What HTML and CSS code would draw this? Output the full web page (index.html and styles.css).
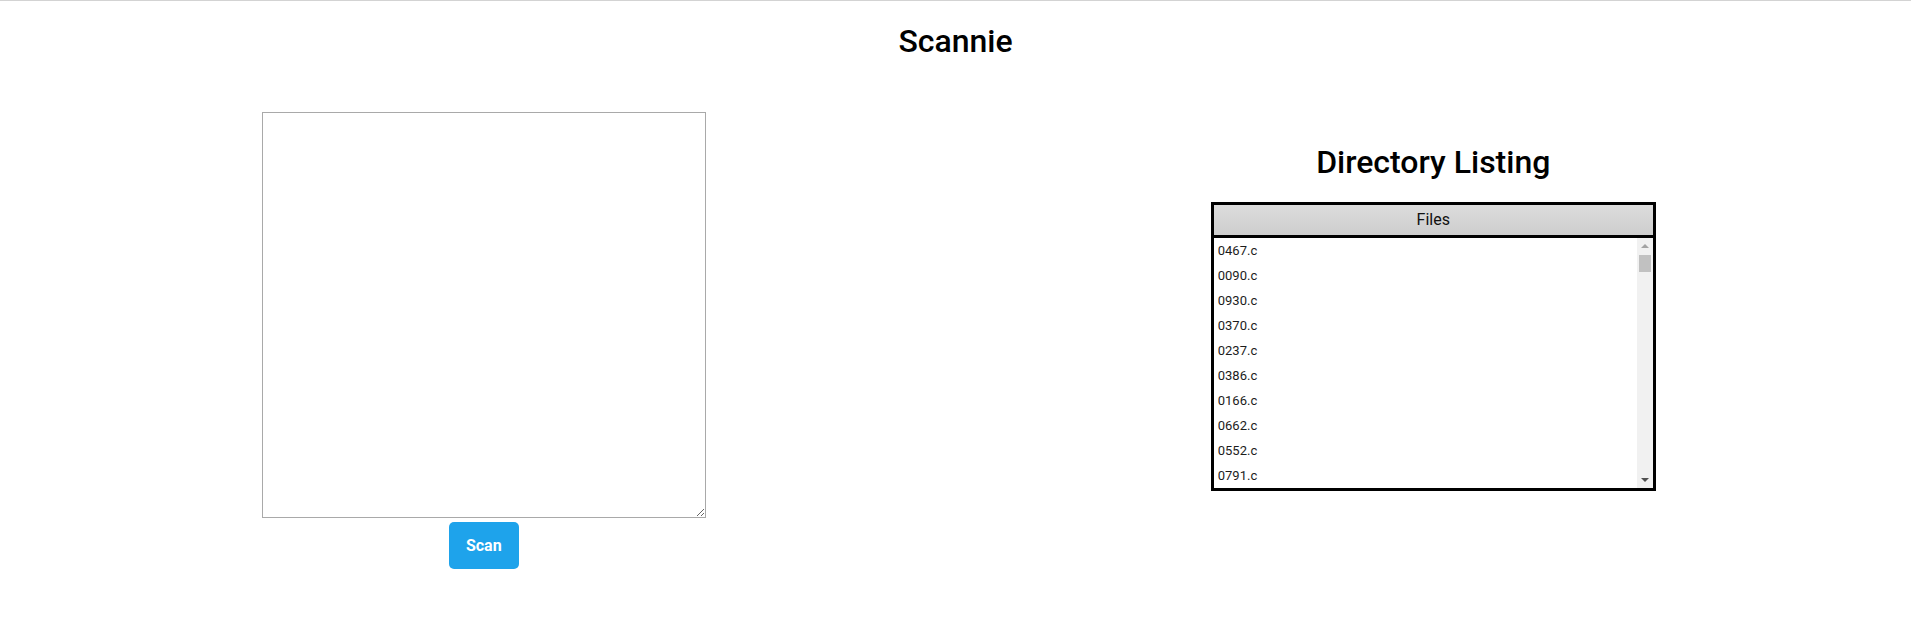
FILE: index.html
```html
<!DOCTYPE html>
<html lang="en">
<head>
<meta charset="utf-8">
<title>Scannie</title>
<link rel="stylesheet" href="styles.css">
</head>
<body>
<header class="topbar">
  <h1 class="app-title">Scannie</h1>
</header>
<main class="columns">
  <section class="scan-col">
    <textarea class="scan-input"></textarea>
    <button class="scan-btn" type="button">Scan</button>
  </section>
  <section class="dir-col">
    <h2 class="dir-title">Directory Listing</h2>
    <div class="files">
      <div class="files-head">Files</div>
      <div class="files-body">
        <ul class="files-list">
          <li>0467.c</li>
          <li>0090.c</li>
          <li>0930.c</li>
          <li>0370.c</li>
          <li>0237.c</li>
          <li>0386.c</li>
          <li>0166.c</li>
          <li>0662.c</li>
          <li>0552.c</li>
          <li>0791.c</li>
        </ul>
        <div class="scrollbar" aria-hidden="true">
          <div class="sb-btn"><span class="arrow-up"></span></div>
          <div class="sb-track"><div class="sb-thumb"></div></div>
          <div class="sb-btn"><span class="arrow-down"></span></div>
        </div>
      </div>
    </div>
  </section>
</main>
</body>
</html>
```

FILE: styles.css
```css
* { box-sizing: border-box; }

html, body {
  margin: 0;
  padding: 0;
  background: #ffffff;
}

body {
  font-family: Roboto, "Liberation Sans", Arial, sans-serif;
  color: #000;
}

.topbar {
  border-top: 1px solid #d3d3d3;
}

.app-title {
  margin: 21px 0 52px;
  font-size: 32px;
  line-height: 38px;
  font-weight: 500;
  text-align: center;
}

.columns {
  display: grid;
  grid-template-columns: 1fr 1fr;
  padding: 0 3px 0 9px;
  align-items: start;
}

.scan-col {
  display: flex;
  flex-direction: column;
  align-items: center;
  gap: 4px;
}

.scan-input {
  display: block;
  width: 444px;
  height: 406px;
  border: 1px solid #a9a9a9;
  padding: 2px;
  margin: 0;
  font-family: "Liberation Mono", monospace;
  font-size: 13px;
  resize: both;
}

.scan-btn {
  width: 70px;
  height: 47px;
  border: none;
  border-radius: 5px;
  background: #1ea3eb;
  color: #fff;
  font-family: Roboto, "Liberation Sans", sans-serif;
  font-size: 16px;
  font-weight: 700;
  padding: 0;
  cursor: pointer;
}

.dir-col {
  display: flex;
  flex-direction: column;
  align-items: center;
  padding-top: 31px;
}

.dir-title {
  margin: 0 0 21px;
  font-size: 32px;
  line-height: 38px;
  font-weight: 500;
}

.files {
  width: 445px;
  border: 3px solid #000;
}

.files-head {
  height: 33px;
  line-height: 30px;
  text-align: center;
  font-size: 16px;
  color: #111;
  background: linear-gradient(#dcdcdc, #cdcdcd);
  border-bottom: 3px solid #000;
}

.files-body {
  display: flex;
  height: 250px;
}

.files-list {
  flex: 1;
  list-style: none;
  margin: 0;
  padding: 0;
}

.files-list li {
  height: 25px;
  line-height: 25px;
  padding-left: 4px;
  font-size: 13px;
  color: #1c1c1c;
}

.scrollbar {
  width: 16px;
  display: flex;
  flex-direction: column;
  background: #f1f1f1;
}

.sb-btn {
  height: 16px;
  display: flex;
  align-items: center;
  justify-content: center;
}

.arrow-up {
  width: 0;
  height: 0;
  border-left: 4px solid transparent;
  border-right: 4px solid transparent;
  border-bottom: 4px solid #a3a3a3;
}

.arrow-down {
  width: 0;
  height: 0;
  border-left: 4px solid transparent;
  border-right: 4px solid transparent;
  border-top: 4px solid #505050;
}

.sb-track {
  flex: 1;
  padding-top: 1px;
}

.sb-thumb {
  height: 17px;
  margin: 0 2px;
  background: #c1c1c1;
}
```
